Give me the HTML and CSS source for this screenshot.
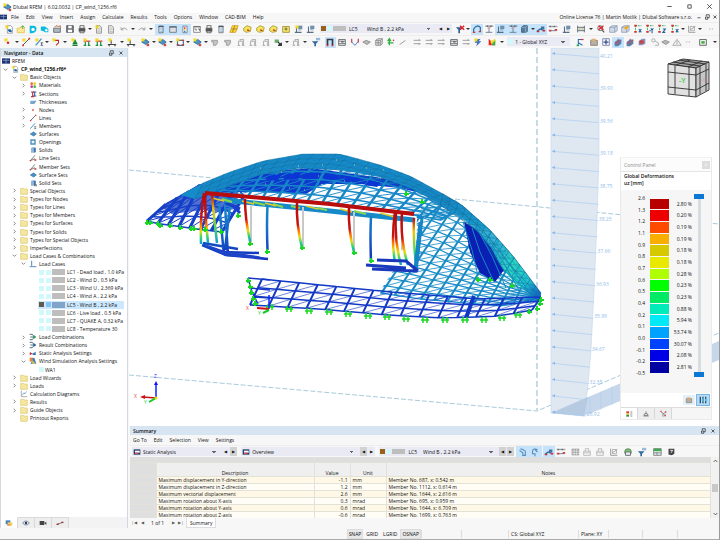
FILE: index.html
```html
<!DOCTYPE html>
<html lang="en">
<head>
<meta charset="utf-8">
<title>Dlubal RFEM</title>
<link rel="stylesheet" href="styles.css">
</head>
<body>
<svg class="sprite" aria-hidden="true">
  <symbol id="star" viewBox="0 0 12 12"><path d="M3.5 1v5M1 3.5h5M1.8 1.8l3.4 3.4M5.2 1.8L1.8 5.2" stroke="#f0d818" fill="none"/></symbol>
  <symbol id="new" viewBox="0 0 12 12"><path d="M4 2h4l2 2v7H4z" fill="#fff" stroke="#8592a0"/><path d="M5 7h3l1 2H6z" fill="#175d9c" stroke="#175d9c"/><use href="#star"/></symbol>
  <symbol id="open" viewBox="0 0 12 12"><path d="M1.500 10.500V5h3l1-1.500h4.500v7z" fill="#ffe999" stroke="#e4c04c"/><path d="M8 2v4M6 4l2-2 2 2" fill="none" stroke="#50ad50"/></symbol>
  <symbol id="dlubal" viewBox="0 0 12 12"><path d="M2 2h5q4 1 3 5-1 4-5 4H2z" fill="#09bbdf"/><circle cx="6" cy="6.500" r="2" fill="#fff"/></symbol>
  <symbol id="cloud" viewBox="0 0 12 12"><path d="M1 3h5l4 3v4H6L3 8H1z" fill="#09bbdf"/><circle cx="7.500" cy="7.500" r="1.500" fill="#fff"/></symbol>
  <symbol id="pack" viewBox="0 0 12 12"><path d="M2 5h8v5H2z" fill="#b1b9c0" stroke="#596575"/><path d="M3 4l2-2 3 1 2-1v3" fill="#e8d9ae" stroke="#a36b58"/></symbol>
  <symbol id="save" viewBox="0 0 12 12"><path d="M2 2h8v8H2z" fill="#71777b" stroke="#51565a"/><path d="M4 2h4v3H4zM3.500 7h5v3h-5z" fill="#fff"/></symbol>
  <symbol id="print" viewBox="0 0 12 12"><path d="M3.500 2h5v3h-5zM3.500 8h5v2.500h-5z" fill="#fff" stroke="#555"/><path d="M2 5h8v4H2z" fill="#555"/></symbol>
  <symbol id="page" viewBox="0 0 12 12"><path d="M3 2h4l2 2v7H3z" fill="#e8e8e6" stroke="#8b8b8b"/><path d="M4 5h4M4 7h4M4 9h4" stroke="#aaa" stroke-width=".6"/></symbol>
  <symbol id="pagestar" viewBox="0 0 12 12"><use href="#page"/><use href="#star"/></symbol>
  <symbol id="undo" viewBox="0 0 12 12"><path d="M2.500 4v3h3M3 6q3-3 7 1" fill="none" stroke="#969696"/></symbol>
  <symbol id="redo" viewBox="0 0 12 12"><path d="M9.500 4v3h-3M9 6Q6 3 2 7" fill="none" stroke="#969696"/></symbol>
  <symbol id="pane" viewBox="0 0 12 12"><path d="M3.500 2.500h5v8h-5z" fill="#ececec" stroke="#626d7b"/><path d="M3 3h6" stroke="#4c596b" stroke-width="1.500"/><path d="M5 5h3M5 7h3M5 9h3" stroke="#66a5dc" stroke-width=".7"/></symbol>
  <symbol id="table" viewBox="0 0 12 12"><path d="M2 3h8v7H2z" fill="#dedede" stroke="#697480"/><path d="M2 3.500h8" stroke="#697480" stroke-width="2"/></symbol>
  <symbol id="scale" viewBox="0 0 12 12"><path d="M3.500 2.500h5v8h-5z" fill="#fff" stroke="#68788b"/><path d="M5 4h1.500v2H5z" fill="#e42127"/><path d="M5 6h1.500v2H5z" fill="#f5da1a"/><path d="M5 8h1.500v2H5z" fill="#1f69cb"/></symbol>
  <symbol id="window" viewBox="0 0 12 12"><path d="M2 3h8v7H2z" fill="#fff" stroke="#777"/><path d="M2 3.500h8M3 6h2v2M7 6h2v2" fill="none" stroke="#555"/></symbol>
  <symbol id="plane" viewBox="0 0 12 12"><path d="M4 2h7L8 10H1z" fill="#f7de32" stroke="#d29a2a"/><path d="M3 6h7M7 2L4 10" stroke="#a7752d"/></symbol>
  <symbol id="yellow" viewBox="0 0 12 12"><path d="M2 5l4-3 5 2-1 5-5 1-3-2z" fill="#f5e659" stroke="#a8973a"/><path d="M6 7l3 1" stroke="#c23822" stroke-width="1.500"/></symbol>
  <symbol id="ybox" viewBox="0 0 12 12"><path d="M2 3h8v7H2z" fill="#f5e768" stroke="#9c8a38"/><path d="M4 6h4M6 4v4" stroke="#5d5935"/></symbol>
  <symbol id="load" viewBox="0 0 12 12"><path d="M3 3v7M1 10h8" stroke="#566e85" stroke-width="1.300"/><path d="M5 2h5v4H5z" fill="#7090b1"/><path d="M5 7h4" stroke="#8394a2"/></symbol>
  <symbol id="loadstar" viewBox="0 0 12 12"><use href="#load"/><use href="#star"/></symbol>
  <symbol id="filter" viewBox="0 0 12 12"><path d="M1 5h8L6 8v3H4V8z" fill="#3269a2"/><path d="M6 1h5v3H6z" fill="#9ab8d7"/></symbol>
  <symbol id="filterx" viewBox="0 0 12 12"><path d="M1 4h7L6 7v4H4V7z" fill="#28629d"/><path d="M6 2l5 5M11 2L6 7" stroke="#df1a22" stroke-width="1.600"/></symbol>
  <symbol id="deform" viewBox="0 0 12 12"><path d="M2 10V6q4-6 8-2v5" fill="none" stroke="#376d99" stroke-width="1.500"/><path d="M1 10h3M8 9h3" stroke="#d13c38" stroke-width="1.500"/></symbol>
  <symbol id="dots" viewBox="0 0 12 12"><path d="M2 2.500h9" stroke="#46515c" stroke-width="2" stroke-dasharray="1 .7"/><path d="M6 4v6M2 10h8" stroke="#617487"/><path d="M4 5l4-1" stroke="#d88"/></symbol>
  <symbol id="block" viewBox="0 0 12 12"><path d="M3 4l2-2h5v7l-2 1H3z" fill="#567d9f" stroke="#41617c"/><path d="M3 4h5l2-2M8 4v6" fill="none" stroke="#91b0cb"/></symbol>
  <symbol id="result" viewBox="0 0 12 12"><path d="M1 9l4-3 5 2" fill="none" stroke="#2563a0" stroke-width="1.500"/><path d="M6 3h4v3H6z" fill="#45759e"/><path d="M1 9h3M8 8h3" stroke="#d42c31" stroke-width="2"/></symbol>
  <symbol id="xxx" viewBox="0 0 12 12"><path d="M1 3h10" stroke="#4b5358" stroke-width="2" stroke-dasharray="1 .6"/><path d="M2 8h8" stroke="#3e7aad"/><path d="M1 8h3M8 7h3" stroke="#d53e38" stroke-width="2"/></symbol>
  <symbol id="rail" viewBox="0 0 12 12"><path d="M2 2v8M10 2v8M2 4h8M2 8h8" stroke="#4b5b69"/><path d="M4 5v2M6 5v2M8 5v2" stroke="#ba5"/></symbol>
  <symbol id="findx" viewBox="0 0 12 12"><circle cx="5" cy="5" r="3" fill="#eee" stroke="#666"/><path d="M7 7l3 3" stroke="#555" stroke-width="1.500"/><path d="M3 2l6 5M9 2L3 7" stroke="#dc2024" stroke-width="1.500"/></symbol>
  <symbol id="cube" viewBox="0 0 12 12"><path d="M2 4l3-2h6v6l-3 2H2zM2 4h6v6M8 4l3-2" fill="#d2d9e8" stroke="#8290ac" stroke-width=".8"/></symbol>
  <symbol id="cubey" viewBox="0 0 12 12"><use href="#cube"/><path d="M6 6l3-3" stroke="#eeae1b" stroke-width="3"/></symbol>
  <symbol id="ax" viewBox="0 0 12 12"><path d="M3 2v8M3 2h7" stroke="#38a657" stroke-width="1.300" stroke-dasharray="2 1"/><path d="M1.500 2h3M1.500 9.500h3" stroke="#d82f31" stroke-width="2"/><path d="M7 6l3 4M10 6l-3 4" stroke="#20659a" stroke-width="1.300"/></symbol>
  <symbol id="ay" viewBox="0 0 12 12"><path d="M3 2v8M3 2h7" stroke="#38a657" stroke-width="1.300" stroke-dasharray="2 1"/><path d="M1.500 2h3M1.500 9.500h3" stroke="#d82f31" stroke-width="2"/><path d="M7 5l1.500 2.500L10 5M8.500 7.500V11M5 8h2" stroke="#20659a" stroke-width="1.300" fill="none"/></symbol>
  <symbol id="az" viewBox="0 0 12 12"><path d="M3 2v8M3 2h7" stroke="#38a657" stroke-width="1.300" stroke-dasharray="2 1"/><path d="M1.500 2h3M1.500 9.500h3" stroke="#d82f31" stroke-width="2"/><path d="M7 6h3l-3 4h3" stroke="#20659a" stroke-width="1.300" fill="none"/></symbol>
  <symbol id="graph" viewBox="0 0 12 12"><path d="M2 2v8h8M4 7l6-4" fill="none" stroke="#8e8e8e"/><path d="M4 3h5v5H4z" fill="none" stroke="#aaa"/></symbol>
  <symbol id="node" viewBox="0 0 12 12"><circle cx="6" cy="6" r="1.300" fill="#d22"/></symbol>
  <symbol id="nodestar" viewBox="0 0 12 12"><use href="#star"/><circle cx="6" cy="7" r="1.500" fill="#d22"/></symbol>
  <symbol id="line" viewBox="0 0 12 12"><path d="M2 10L10 2" stroke="#343434"/><path d="M1.500 10h2M9 2h2" stroke="#d33" stroke-width="2"/></symbol>
  <symbol id="linestar" viewBox="0 0 12 12"><use href="#line"/><use href="#star"/></symbol>
  <symbol id="member" viewBox="0 0 12 12"><path d="M2 10L9 2" stroke="#428bc1" stroke-width="1.400"/><path d="M8 7h3M8 10h3M9 7v3" stroke="#4d5e70"/></symbol>
  <symbol id="memberstar" viewBox="0 0 12 12"><use href="#member"/><use href="#star"/></symbol>
  <symbol id="arc" viewBox="0 0 12 12"><path d="M4 4h5v3l-3 3" fill="none" stroke="#b23030" stroke-width="1.300"/><use href="#star"/></symbol>
  <symbol id="support" viewBox="0 0 12 12"><path d="M6 4l2 4H4zM3 10h6" fill="#19af3c" stroke="#168136" stroke-width="1.500"/><use href="#star"/></symbol>
  <symbol id="supports" viewBox="0 0 12 12"><path d="M2 5h8" stroke="#d23838" stroke-width="1.500"/><path d="M4 6v4M8 6v4M2 10h3M7 10h3" stroke="#189546" stroke-width="1.500"/><use href="#star"/></symbol>
  <symbol id="beam" viewBox="0 0 12 12"><path d="M1 9h10M5 8V4M2 9l1 2M9 9l1 2" stroke="#444" stroke-width="1.300"/><use href="#star"/></symbol>
  <symbol id="surface" viewBox="0 0 12 12"><path d="M2 6l5-3 4 3-4 3z" fill="#4a91c7" stroke="#2b6c9e"/></symbol>
  <symbol id="surfacestar" viewBox="0 0 12 12"><use href="#surface"/><path d="M8 8h3v3H8z" fill="#c34e45"/><use href="#star"/></symbol>
  <symbol id="opening" viewBox="0 0 12 12"><path d="M3 3h6v6H3z" fill="#eef5fb" stroke="#4b8fc2" stroke-width="2"/></symbol>
  <symbol id="openingstar" viewBox="0 0 12 12"><path d="M3 4h7v6H3z" fill="#fff" stroke="#40709b" stroke-width="1.400"/><path d="M2 9.500h3M8 9.500h3M8 4h3" stroke="#cf3932" stroke-width="1.500"/><use href="#star"/></symbol>
  <symbol id="solid" viewBox="0 0 12 12"><path d="M3 3l2-1h5v7l-2 1H3z" fill="#90b5d8"/><path d="M7 3h3v6l-2 1z" fill="#3974aa"/></symbol>
  <symbol id="solidset" viewBox="0 0 12 12"><use href="#solid"/><path d="M9 8v3M11 8v3" stroke="#333"/></symbol>
  <symbol id="thick" viewBox="0 0 12 12"><path d="M2 4h8l-2 4H2z" fill="#76add9"/><path d="M2 8h6l2-4" fill="none" stroke="#356b9c"/></symbol>
  <symbol id="material" viewBox="0 0 12 12"><circle cx="4" cy="4" r="2" fill="#eb6a33"/><circle cx="8.500" cy="4" r="2" fill="#e6cb28"/><circle cx="4" cy="8.500" r="2" fill="#cb36ae"/><circle cx="8.500" cy="8.500" r="2" fill="#44bb43"/></symbol>
  <symbol id="section" viewBox="0 0 12 12"><path d="M3 3h5M3 10h5M5.500 3v7" stroke="#d42e37" stroke-width="1.700"/><path d="M6 3h5M6 9h5M8.500 3v6" stroke="#2869a3" stroke-width="1.700"/></symbol>
  <symbol id="lineset" viewBox="0 0 12 12"><path d="M2 10L9 2M2 10l7-3" stroke="#444"/><path d="M8 9h3M1 10h2" stroke="#c23b3b" stroke-width="2"/></symbol>
  <symbol id="folder" viewBox="0 0 12 12"><path d="M1 2h4l1 1h5v8H1z" fill="#f5e79d" stroke="#dbc777"/></symbol>
  <symbol id="lc" viewBox="0 0 12 12"><path d="M4 1v8M1 10h10" stroke="#3e79b0" stroke-width="1.300"/></symbol>
  <symbol id="comb" viewBox="0 0 12 12"><path d="M1 2h4l3 4-3 4H1M2 6h6" fill="none" stroke="#3d586c" stroke-width="1.300"/><path d="M7 3l4 3-4 3z" fill="#279f4d"/></symbol>
  <symbol id="rcomb" viewBox="0 0 12 12"><path d="M1 2h4l3 4-3 4H1M2 6h6" fill="none" stroke="#3d586c" stroke-width="1.300"/><path d="M7 3l4 3-4 3z" fill="#2365aa"/></symbol>
  <symbol id="static" viewBox="0 0 12 12"><path d="M1 7h4M2 5v4" fill="none" stroke="#d4373b" stroke-width="1.700"/><path d="M5 7l5-3v5H6z" fill="#2f75b4"/></symbol>
  <symbol id="windset" viewBox="0 0 12 12"><path d="M1 1h5v6H1z" fill="#e7863b"/><path d="M5 2l3-1 3 9H2l4-5z" fill="#397ebd"/><path d="M5 5l5 5H5z" fill="#f2cb45"/></symbol>
  <symbol id="calc" viewBox="0 0 12 12"><path d="M2 1v9h9" fill="none" stroke="#888"/><path d="M3 8l3-4 1 2 3-4" fill="none" stroke="#5297cb"/></symbol>
  <symbol id="rfem" viewBox="0 0 12 12"><path d="M0 2h12v8H0z" fill="#1e3473"/><path d="M1 5h10M6 2v8" stroke="#9badd7"/></symbol>
  <symbol id="grey" viewBox="0 0 12 12"><path d="M3 10V5h5v5M5 5V3h4v7M2 10h3M7 10h3" fill="none" stroke="#b4b4b4" stroke-width="1.300"/></symbol>
  <symbol id="greyf" viewBox="0 0 12 12"><path d="M2 4h7v3l-2 3H4V6H2z" fill="#c4c4c4" stroke="#999"/></symbol>
  <symbol id="green" viewBox="0 0 12 12"><path d="M2 3h5v4H2z" fill="#68a86d"/><path d="M6 6l4 4M10 7v3H6" stroke="#313b36" stroke-width="1.500"/></symbol>
  <symbol id="frame" viewBox="0 0 12 12"><path d="M3 10V3h6v7" fill="none" stroke="#3a3a45" stroke-width="2"/><path d="M2 10h2M8 10h2" stroke="#d22" stroke-width="2"/></symbol>
  <symbol id="film" viewBox="0 0 12 12"><path d="M2 3h8v7H2zM2 5h8M2 8h8" fill="none" stroke="#5e6266"/><path d="M5 6h3" stroke="#222"/></symbol>
  <symbol id="moment" viewBox="0 0 12 12"><path d="M2 3v3l4 4 4-5V3" fill="none" stroke="#376dbf"/><path d="M2 2v5M10 2v5" stroke="#d83f49" stroke-width="1.300"/></symbol>
  <symbol id="mesh" viewBox="0 0 12 12"><path d="M1 6l4-2 5 2-4 3z" fill="#bbb" stroke="#888"/></symbol>
  <symbol id="cubegrey" viewBox="0 0 12 12"><path d="M2 4l3-2h5v6l-2 2H2zM2 4h6v6M8 4l2-2M5 4v6M2 7h6" fill="#ddd" stroke="#777" stroke-width=".8"/></symbol>
  <symbol id="react" viewBox="0 0 12 12"><path d="M4 10V3M2 5l2-3 2 3M2 7h7" fill="none" stroke="#2eae42" stroke-width="1.500"/><circle cx="9" cy="4" r="1" fill="#d33"/></symbol>
  <symbol id="diag" viewBox="0 0 12 12"><path d="M2 9l7-5" stroke="#8a8a8a"/></symbol>
  <symbol id="diaggrey" viewBox="0 0 12 12"><path d="M2 4h8l-2-1M2 8h8L8 9" fill="none" stroke="#8e8e8e"/></symbol>
  <symbol id="flash" viewBox="0 0 12 12"><path d="M4 3l5-1-2 3h3l-6 6 1-4H2z" fill="#3d6ec3"/><use href="#star"/></symbol>
  <symbol id="rainbow" viewBox="0 0 12 12"><path d="M2 2v8h8z" fill="#e52524"/><path d="M4 5l6-3v4l-4 4z" fill="#f3dd2d"/><path d="M6 8l4-4v6H6z" fill="#42ac48"/></symbol>
  <symbol id="axis" viewBox="0 0 12 12"><path d="M4 9V3h6M4 7l5 3" fill="none" stroke="#2a70b7" stroke-width="1.300"/><path d="M2 10h3" stroke="#2ca54d" stroke-width="2"/><path d="M7 3h3" stroke="#d33" stroke-width="1.500"/></symbol>
  <symbol id="photo" viewBox="0 0 12 12"><path d="M2 4h8v6H2z" fill="#b6b0a5" stroke="#847b6f"/><path d="M3 2h5v3H3z" fill="#deae78"/></symbol>
  <symbol id="target" viewBox="0 0 12 12"><path d="M2 2h8v8H2z" fill="none" stroke="#707bb1"/><path d="M6 3v6M3 6h6" stroke="#314e8a" stroke-width="1.500"/></symbol>
  <symbol id="orb" viewBox="0 0 12 12"><path d="M2 6l4-3h4v5l-4 3H2z" fill="#5085b7"/><path d="M2 8l8-4M6 2v8" stroke="#d24a4a"/></symbol>
  <symbol id="orbr" viewBox="0 0 12 12"><path d="M2 5l4-3h4v6l-4 2H2z" fill="#8094bf"/><path d="M3 4h5v4H3z" fill="#cf4048"/></symbol>
  <symbol id="link" viewBox="0 0 12 12"><circle cx="4" cy="4" r="2" fill="none" stroke="#a4a4a4"/><path d="M6 5l4 2v3H6" fill="none" stroke="#a4a4a4"/></symbol>
  <symbol id="turn" viewBox="0 0 12 12"><path d="M4 2l3 1 3 2v5H7V7L3 4" fill="none" stroke="#5a8cba" stroke-width="1.300"/></symbol>
  <symbol id="turnback" viewBox="0 0 12 12"><path d="M9 3q-5-2-6 2v3h3v3M6 3l3 3" fill="none" stroke="#5a8cba" stroke-width="1.300"/></symbol>
  <symbol id="mirror" viewBox="0 0 12 12"><path d="M6 2v9M5 4l-4 6h4M7 4l4 6H7" fill="none" stroke="#a0a0a0"/></symbol>
  <symbol id="greenbox" viewBox="0 0 12 12"><path d="M2 3h8v7H2z" fill="#eaf6e9" stroke="#555"/><path d="M4 5h4v3H4z" fill="#49a848"/></symbol>
  <symbol id="more" viewBox="0 0 12 12"><path d="M4 6h1M7 6h1" stroke="#777"/></symbol>
  <symbol id="eye" viewBox="0 0 12 12"><path d="M1 6q5-6 10 0-5 6-10 0" fill="#fff" stroke="#435670"/><circle cx="6" cy="6" r="2" fill="#2c3b65"/></symbol>
  <symbol id="camera" viewBox="0 0 12 12"><path d="M1 3h7v6H1zM8 6l3-2v5z" fill="#444"/></symbol>
  <symbol id="seg" viewBox="0 0 12 12"><path d="M1 8l10-3" stroke="#444"/><path d="M1 8h3M8 5h3" stroke="#ad272e" stroke-width="2"/></symbol>
  <symbol id="navi" viewBox="0 0 12 12"><path d="M1 2h7v6H1z" fill="#4c83b7"/><path d="M4 5h7v5H4z" fill="#f0cf62"/><path d="M3 9h5" stroke="#c4483e"/></symbol>
  <symbol id="legend" viewBox="0 0 12 12"><path d="M2 2h4v3H2z" fill="#d33"/><path d="M2 5h4v2H2z" fill="#ead21e"/><path d="M2 7h4v3H2z" fill="#3a8b3d"/><path d="M8 3h3M8 6h3M8 9h3" stroke="#555"/></symbol>
  <symbol id="balance" viewBox="0 0 12 12"><path d="M2 9h8M6 2v3M3 8q0-3 3-3t3 3z" fill="none" stroke="#5e5e5e"/></symbol>
  <symbol id="branch" viewBox="0 0 12 12"><path d="M6 10V5L3 3M6 6l4-3M9 6v4" fill="none" stroke="#606060"/><path d="M2 2h2M9 3h2M8 8h2" stroke="#d44" stroke-width="2"/></symbol>
  <symbol id="bars" viewBox="0 0 12 12"><path d="M2 1v10M6 1v10M10 1v10" stroke="#2d5177" stroke-width="2"/><path d="M6 3v6M10 4v4" stroke="#52bdd4" stroke-width="2"/></symbol>
  <symbol id="static2" viewBox="0 0 12 12"><path d="M1 2h10v8H1z" fill="#25406f"/><path d="M3 4h7v3H3z" fill="#fff"/><path d="M3 8h5" stroke="#e2504e" stroke-width="2"/></symbol>
  <symbol id="globe" viewBox="0 0 12 12"><circle cx="6" cy="6" r="4" fill="#81bd7b" stroke="#4d864b"/><path d="M3 6h6v4H3z" fill="#eee" stroke="#667"/></symbol>
  <symbol id="sheet" viewBox="0 0 12 12"><path d="M2 2h9v8H2z" fill="#eee" stroke="#777"/><path d="M2 3.500h9" stroke="#3fa850" stroke-width="3"/><path d="M6 6v4M2 7h9" stroke="#688"/></symbol>
  <symbol id="help" viewBox="0 0 12 12"><path d="M3 2h7v6l-3 2-4-1z" fill="#444"/><path d="M5 4h3L6 7" fill="none" stroke="#fff"/></symbol>
  <symbol id="keys" viewBox="0 0 12 12"><path d="M2 2h9v8H2z" fill="#a2a2a2"/><path d="M2 5h9M2 8h9M5 2v8M8 2v8" stroke="#ddd"/></symbol>
  <symbol id="tray" viewBox="0 0 12 12"><path d="M2 5h8v5H2zM4 5V2h4v3M2 7h8" fill="none" stroke="#b4b4b4"/></symbol>
</svg>

<div class="app">
  <header class="titlebar">
    <svg class="ic"><use href="#surfacestar"/></svg>
    <h1>Dlubal RFEM | 6.02.0032 | CP_wind_1256.rf6</h1>
    <div class="winbtns">
      <button aria-label="Minimize"><svg viewBox="0 0 8 8"><path d="M2 4h4" stroke="#333" stroke-width=".7"/></svg></button>
      <button aria-label="Maximize"><svg viewBox="0 0 8 8"><path d="M2.500 2.500h3v3h-3z" fill="none" stroke="#333" stroke-width=".7"/></svg></button>
      <button aria-label="Close"><svg viewBox="0 0 8 8"><path d="M2 2l4 4M6 2L2 6" stroke="#333" stroke-width=".7"/></svg></button>
    </div>
  </header>
  <nav class="menubar">
    <svg class="ic"><use href="#rfem"/></svg>
    <a href="#">File</a><a href="#">Edit</a><a href="#">View</a><a href="#">Insert</a><a href="#">Assign</a><a href="#">Calculate</a><a href="#">Results</a><a href="#">Tools</a><a href="#">Options</a><a href="#">Window</a><a href="#">CAD-BIM</a><a href="#">Help</a>
    <span class="license">Online License 76 | Martin Motlik | Dlubal Software s.r.o.</span>
    <div class="docbtns">
      <button aria-label="Minimize document"><svg viewBox="0 0 8 8"><path d="M2 5h4" stroke="#333"/></svg></button>
      <button aria-label="Restore document"><svg viewBox="0 0 8 8"><path d="M2 4h3v3H2zM3 3V1h4v4H5" fill="none" stroke="#333"/></svg></button>
      <button aria-label="Close document"><svg viewBox="0 0 8 8"><path d="M2 2l4 4M6 2L2 6" stroke="#333"/></svg></button>
    </div>
  </nav>

  <div class="toolbar main-tools">
    <div class="group" data-icons="new open dlubal cloud pack save print v pagestar page"></div>
    <div class="group" data-icons="undo v redo v"></div>
    <div class="group" data-icons="+pane +table +scale window print pane"></div>
    <div class="group" data-icons="plane yellow yellow yellow ybox"></div>
    <div class="group" data-icons="loadstar load"></div>
    <div class="picker">
      <i class="sw brown"></i><i class="sw cyan"></i><i class="sw wide"></i><span class="code">LC5</span>
      <select aria-label="Load case"><option>Wind B , 2.2 kPa</option></select>
      <button class="step" aria-label="Previous load case">◀</button><button class="step" aria-label="Next load case">▶</button>
    </div>
    <div class="group" data-icons="filterx v"></div>
    <div class="group" data-icons="+deform dots +load +dots +block +v +result xxx"></div>
    <div class="group" data-icons="load rail v"></div>
    <div class="group" data-icons="findx cube cubey"></div>
    <div class="group" data-icons="ax ay az ax v graph v"></div>
    <div class="group" data-icons="more"></div>
  </div>
  <div class="toolbar edit-tools">
    <div class="group" data-icons="nodestar v linestar memberstar v arc v"></div>
    <div class="group" data-icons="support supports supports"></div>
    <div class="group" data-icons="beam v beam"></div>
    <div class="group" data-icons="surfacestar v surfacestar v openingstar v surfacestar v greyf"></div>
    <div class="group" data-icons="greyf grey grey grey green v grey v"></div>
    <div class="group" data-icons="filter"></div>
    <div class="group" data-icons="+frame film"></div>
    <div class="group" data-icons="moment mesh cubegrey react diag"></div>
    <div class="group" data-icons="diaggrey diaggrey diaggrey film diaggrey flash"></div>
    <div class="group" data-icons="rainbow v"></div>
    <div class="picker">
      <i class="sw cyan"></i>
      <select aria-label="Coordinate system"><option>1 - Global XYZ</option></select>
    </div>
    <div class="group" data-icons="axis"></div>
    <div class="group" data-icons="photo target +orb orb orbr"></div>
    <div class="group" data-icons="link mesh mirror more"></div>
    <div class="group" data-icons="greenbox v"></div>
  </div>

  <aside class="navigator">
    <div class="dock-title"><h2>Navigator - Data</h2><button aria-label="Float"><svg viewBox="0 0 8 8"><path d="M2 4h3v3H2zM3 3V1h4v4H5" fill="none" stroke="#333"/></svg></button><button aria-label="Close"><svg viewBox="0 0 8 8"><path d="M2 2l4 4M6 2L2 6" stroke="#333"/></svg></button></div>
    <ul class="tree" id="tree"></ul>
    <div class="spacer"></div>
    <div class="navtabs">
      <button class="on" aria-label="Data"><svg class="ic"><use href="#navi"/></svg></button>
      <button aria-label="Display"><svg class="ic"><use href="#eye"/></svg></button>
      <button aria-label="Views"><svg class="ic"><use href="#camera"/></svg></button>
      <button aria-label="Results"><svg class="ic"><use href="#seg"/></svg></button>
    </div>
  </aside>

  <main class="viewport">
    <svg class="scene" id="scene" viewBox="129 48 590 378" preserveAspectRatio="xMidYMid slice" role="img" aria-label="Deformed dome structure">
      <defs>
        <clipPath id="sideclip"><path d="M417 211L443 194 463 206 490 230 513 256 541 293 540 303 518 315 380 300 380 291 393 271 416 271z"/></clipPath>
        <linearGradient id="tip" x1="455" y1="200" x2="541" y2="290" gradientUnits="userSpaceOnUse"><stop offset="0" stop-color="#168bc8"/><stop offset=".5" stop-color="#17a8cc"/><stop offset=".7" stop-color="#15cfba"/><stop offset=".88" stop-color="#16c5ce"/><stop offset="1" stop-color="#1369c8"/></linearGradient>
        <linearGradient id="col" x1="0" y1="0" x2="0" y2="1"><stop offset="0" stop-color="#b80a0a"/><stop offset=".48" stop-color="#c81310"/><stop offset=".6" stop-color="#ff6800"/><stop offset=".75" stop-color="#e9dc0b"/><stop offset=".88" stop-color="#25d675"/><stop offset="1" stop-color="#119bd8"/></linearGradient>
        <linearGradient id="colb" x1="0" y1="0" x2="0" y2="1"><stop offset="0" stop-color="#168bc8"/><stop offset=".5" stop-color="#1469c8"/><stop offset="1" stop-color="#122fbe"/></linearGradient>
        <linearGradient id="cool" x1="0" y1="0" x2="0" y2="1"><stop offset="0" stop-color="#b80a0a"/><stop offset=".3" stop-color="#e9ca0b"/><stop offset=".7" stop-color="#49d65f"/><stop offset="1" stop-color="#119bd8"/></linearGradient>
      </defs>
      <g fill="none" stroke="#a8cadb" stroke-dasharray="5 2">
        <path d="M129 170L213 178M455 199L719 224M129 375L537 411L719 333"/>
        <path d="M537 48V411" stroke="#c6dce4" stroke-width="2" stroke-dasharray="6 3"/>
      </g>
      <path d="M551 413L719 341V360L584 416z" fill="#c6d7eb"/>
      <path d="M551 48H599V155L597 220 594 290 591 350 588 385 584 416 551 413z" fill="#dfe7f1" stroke="#c0d6ee" stroke-width=".6"/>
      <path d="M551 413L588 397 584 416z" fill="#b6cae2"/>
      <g id="loads" stroke="#a5c9f0" fill="#86b7ec"></g>

      <path d="M162 208L184 193 204 184 240 182 236 209 214 212 203 210 172 214z" fill="#1740c6" opacity=".75"/>
      <g id="mesh-left"></g>
      <path d="M212 192L235 177 262 172 310 168 390 179 432 196 400 188 360 184 322 184 306 194 260 192z" fill="#0d39cd"/>
      <g id="mesh-roof"></g>
      <path d="M180 195L203 183 230 172 263 161 303 154 340 154 380 165 410 176 443 194 463 206 490 230 478 228 450 209 410 188 380 177 340 170 300 168 262 174 232 184 212 193 195 199z" fill="#168bca"/>
      <g id="mesh-crest"></g>
      <path d="M268 176l14-2-4 6-13 1zM287 174l14-1-3 6-15 1zM306 173l15 0-4 6-15 0zM327 174l13 1-3 5-14-1zM347 176l13 2-3 4-14-1zM369 180l12 3-4 4-12-2z" fill="#0b36d5"/>

      <g id="mesh-side" clip-path="url(#sideclip)"></g>
      <path d="M464 222L478 230 492 247 504 270 495 282 480 273 470 252z" fill="#0a20b5"/>
      <path d="M455 200L463 206 490 230 513 256 541 293 540 300 528 293 514 282 502 268 491 248 478 232 466 222 440 205z" fill="url(#tip)" opacity=".85"/>
      <g id="mesh-tip"></g>
      <path d="M463 222L472 250 478 276M472 228l8 24 14 30M480 234l12 22 14 32M489 240l13 20 18 32M498 248l14 20 20 28" stroke="#168abf" fill="none"/>
      <g id="mesh-front"></g>
      <path d="M248 278L270 280M248 278l4 14 6 12M250 288l20 2M254 297l16 1" stroke="#1238c5" stroke-width="1.500" fill="none"/>
      <path d="M474 296l-8 22" stroke="#1236c4" stroke-width="4"/>

      <path d="M225 204L228 256M230 205L225 250M219 203l5 52M202 245l24 10 42 4M203 243l35 6M222 252l37 1" fill="none" stroke="url(#colb)" stroke-width="2.500"/>
      <path d="M202 243L225 251 258 256 268 259 225 256z" fill="#1c43c8"/>
      <path d="M232 205L240 213M226 203l14 6" stroke="#1640c8" stroke-width="3"/>
      <path d="M224 200L330 211 414 220" stroke="#168ac8" stroke-width="5" fill="none"/>
      <path d="M205 193L330 204 414 214" stroke="#b90d0d" stroke-width="4" fill="none"/>
      <path d="M222 199l10 3M253 202l12 3M273 204l10 3M291 206l9 2M317 208l10 2M354 211l12 3" stroke="#8cd64b" stroke-width="2"/>
      <path d="M212 198l12 3M242 201l12 3M265 203l11 3M306 206l12 3M340 209l12 3M380 213l15 4" stroke="#e2cc2b" stroke-width="1.500"/>
      <g fill="none" stroke-width="2.500">
        <path d="M204 193q-4 22-3 51" stroke="url(#col)"/><path d="M205 194q0 24 3 49" stroke="url(#col)"/><path d="M212 195q2 23 5 48" stroke="url(#cool)"/>
        <path d="M251 206V244M303 207V248M354 212V250M402 216V250" stroke="#c8c8c8" stroke-width="2"/>
        <path d="M245 199q0 20 5 42" stroke="url(#col)"/><path d="M297 203q-1 20 5 45" stroke="url(#col)"/><path d="M349 208q-1 22 5 44" stroke="url(#col)"/>
        <path d="M267.500 205q-1 20 0 45M371 216q-1 20 0 45" stroke="url(#colb)"/>
        <path d="M395 212q-4 28 0 50" stroke="url(#col)"/><path d="M396 213q-2 27 5 52" stroke="url(#col)"/><path d="M402 213q-2 27 6 52" stroke="url(#col)"/>
        <path d="M414 218q-1 22 2 46" stroke="url(#cool)"/>
      </g>
      <path d="M417 216L422 218 416 272M420 222l-5 48" fill="none" stroke="#1585c4" stroke-width="3"/>
      <path d="M377 260l29 1 12 10M366 265l40 3M372 269l45 2" stroke="#1a38bb" stroke-width="3" fill="none"/>
      <g id="supports-layer" fill="none" stroke="#18d922" stroke-width="2"></g>
      <g stroke="#e5dc74" stroke-width=".8"><path d="M260 168h1M281 172h1M298 166h1M318 176h1M336 160h1M354 165h1M366 168h1M383 170h1M344 181h1M322 165h1M380 178h1M289 188h1M304 190h1M265 184h1"/></g>
      <g fill="none"><path d="M269 309V295" stroke="#12f" stroke-width="1.500"/><path d="M269 309l-12-1" stroke="#c11" stroke-width="2"/><path d="M269 310l-6 3" stroke="#1c2" stroke-width="2"/></g>
      <text x="246" y="310" class="axr">X</text><text x="258" y="315" class="axg">Y</text>
      <g fill="none"><path d="M156 398V384" stroke="#12f" stroke-width="1.500"/><path d="M156 398l-13-1" stroke="#c11" stroke-width="1.500"/><path d="M156 398l-7 4" stroke="#1c2" stroke-width="2"/></g>
      <path d="M154 385l2-4 2 4z" fill="#11f"/><path d="M145 395v4l-5-2z" fill="#c11"/><circle cx="156" cy="398" r="1.500" fill="#e5df14"/>
      <text x="154" y="378" class="axb">Z</text><text x="134" y="398" class="axr">X</text><text x="144" y="404" class="axg">Y</text>
      <g stroke="#2f2f2f" stroke-width=".9" stroke-linejoin="round">
        <path d="M668 64l15-5 26 3-13 6z" fill="#a1a1a4"/><path d="M668 64l28 4v29l-28-3z" fill="#e1e1e2"/><path d="M696 68l13-6v28l-13 7z" fill="#c7c7c9"/>
        <path d="M668 72l28 3 13-6M668 87l28 3 13-7M675 65v29M689 67v29M700 66v28M706 64v27M673 62l27 4M679 60l26 4M676 65l14-5M688 67l14-6" fill="none"/>
      </g>
      <text x="679" y="83" class="axg face">-Y</text><text x="701" y="82" class="axr pale">-X</text>
    </svg>

    <section class="panel">
      <header><h2>Control Panel</h2><button aria-label="Close panel">×</button></header>
      <div class="panel-head"><strong>Global Deformations</strong><strong>uz [mm]</strong></div>
      <div class="legend">
        <ol class="values"><li>2.6</li><li>1.3</li><li>1.2</li><li>1.1</li><li>0.9</li><li>0.8</li><li>0.7</li><li>0.6</li><li>0.5</li><li>0.4</li><li>0.2</li><li>0.1</li><li>0.0</li><li>-0.1</li><li>-0.2</li><li>-0.5</li></ol>
        <ol class="bands" id="bands"></ol>
        <div class="sliders"><input type="range" class="hi" value="100" aria-label="Upper limit"><input type="range" class="lo" value="0" aria-label="Lower limit"></div>
      </div>
      <div class="panel-actions"><button aria-label="Edit colours"><svg class="ic"><use href="#photo"/></svg></button><button class="on" aria-label="Show scale"><svg class="ic"><use href="#bars"/></svg></button></div>
      <div class="panel-tabs"><button class="on" aria-label="Colour scale"><svg class="ic"><use href="#legend"/></svg></button><button aria-label="Factors"><svg class="ic"><use href="#balance"/></svg></button><button aria-label="Filter"><svg class="ic"><use href="#branch"/></svg></button></div>
    </section>
  </main>

  <section class="summary">
    <div class="dock-title"><h2>Summary</h2><button aria-label="Float"><svg viewBox="0 0 8 8"><path d="M2 4h3v3H2zM3 3V1h4v4H5" fill="none" stroke="#333"/></svg></button><button aria-label="Close"><svg viewBox="0 0 8 8"><path d="M2 2l4 4M6 2L2 6" stroke="#333"/></svg></button></div>
    <nav class="submenu"><a href="#">Go To</a><a href="#">Edit</a><a href="#">Selection</a><a href="#">View</a><a href="#">Settings</a></nav>
    <div class="toolbar sum-tools">
      <div class="picker"><svg class="ic"><use href="#static2"/></svg><select aria-label="Analysis"><option>Static Analysis</option></select><button class="step" aria-label="Previous analysis">◀</button><button class="step off" aria-label="Next analysis">▶</button></div>
      <div class="picker"><svg class="ic"><use href="#static2"/></svg><select aria-label="Table"><option>Overview</option></select><button class="step off" aria-label="Previous table">◀</button><button class="step" aria-label="Next table">▶</button></div>
      <div class="picker"><i class="sw brown"></i><i class="sw cyan"></i><i class="sw wide"></i><span class="code">LC5</span><select aria-label="Summary load case"><option>Wind B , 2.2 kPa</option></select><button class="step off" aria-label="Previous">◀</button><button class="step off" aria-label="Next">▶</button></div>
      <div class="group" data-icons="+turn +turnback"></div>
      <div class="group" data-icons="+result xxx"></div>
      <div class="group" data-icons="keys tray tray"></div>
      <div class="group" data-icons="graph globe filter sheet help"></div>
    </div>
    <div class="tablewrap">
      <table>
        <thead>
          <tr class="letters"><th></th><th></th><th></th><th></th><th></th></tr>
          <tr><th class="num"></th><th>Description</th><th>Value</th><th>Unit</th><th>Notes</th></tr>
        </thead>
        <tbody>
          <tr><th></th><td>Maximum displacement in Y-direction</td><td>-1.1</td><td>mm</td><td>Member No. 687, x: 0.542 m</td></tr>
          <tr><th></th><td>Maximum displacement in Z-direction</td><td>1.2</td><td>mm</td><td>Member No. 1112, x: 0.614 m</td></tr>
          <tr><th></th><td>Maximum vectorial displacement</td><td>2.6</td><td>mm</td><td>Member No. 1644, x: 2.616 m</td></tr>
          <tr><th></th><td>Maximum rotation about X-axis</td><td>0.3</td><td>mrad</td><td>Member No. 695, x: 0.959 m</td></tr>
          <tr><th></th><td>Maximum rotation about Y-axis</td><td>0.6</td><td>mrad</td><td>Member No. 1644, x: 6.709 m</td></tr>
          <tr><th></th><td>Maximum rotation about Z-axis</td><td>-0.6</td><td>mrad</td><td>Member No. 1699, x: 0.763 m</td></tr>
        </tbody>
      </table>
      <div class="scroll"><svg viewBox="0 0 8 8"><path d="M2 5l2-2 2 2" fill="none" stroke="#444"/></svg><i></i><svg viewBox="0 0 8 8"><path d="M2 3l2 2 2-2" fill="none" stroke="#444"/></svg></div>
    </div>
    <div class="pager"><button aria-label="First">|◀</button><button aria-label="Previous page">◀</button><span>1 of 1</span><button aria-label="Next page">▶</button><button aria-label="Last">▶|</button><button class="tab">Summary</button></div>
  </section>

  <footer class="status">
    <div class="snaps"><button class="on">SNAP</button><button>GRID</button><button>LGRID</button><button class="on">OSNAP</button></div>
    <span></span><span></span><span>CS: Global XYZ</span><span>Plane: XY</span><span></span><span></span><span></span>
  </footer>
</div>
<script src="app.js"></script>
</body>
</html>
```
FILE: styles.css
```css
* { box-sizing: border-box; }
body { margin: 0; font: 5px/8px "Open Sans", "Noto Sans", sans-serif; color: #111; background: #f5f5f5; }
h1, h2, ul, ol { margin: 0; padding: 0; font: inherit; list-style: none; }
a { color: inherit; text-decoration: none; }
button, select, input { font: inherit; color: inherit; margin: 0; padding: 0; border: 0; background: none; }
button { display: flex; align-items: center; justify-content: center; }
.sprite { position: absolute; width: 0; height: 0; }
.ic { width: 10px; height: 10px; flex: none; display: block; }

.app { display: grid; height: 100vh; grid-template-columns: 128px minmax(0, 1fr); grid-template-rows: 13px 9px 13px 13px minmax(0, 1fr) 102px 11px; border-right: 1px solid #999; border-bottom: 1px solid #aaa; background: #f7f7f7; }
.titlebar, .menubar, .toolbar, .status { grid-column: 1 / -1; min-width: 0; }
.titlebar { display: flex; align-items: center; gap: 1px; padding-left: 2px; background: #fff; }
.titlebar h1 { flex: 1; }
.winbtns, .docbtns { display: flex; }
.winbtns button { width: 20px; }
.winbtns svg { width: 9px; height: 9px; }
.docbtns svg { width: 6px; height: 6px; }
.docbtns button { width: 8px; }
.menubar { display: flex; align-items: center; gap: 7px; padding-bottom: 1px; }
.menubar .ic { width: 7px; height: 8px; margin-right: -3px; }
.license { margin-left: auto; margin-right: -4px; }

.toolbar { display: grid; border-top: 1px solid #ededed; }
.main-tools { padding-left: 3px; grid-template-columns: 115fr 37fr 73fr 65fr 25fr 136fr 17fr 89fr 35fr 37fr 72fr 15fr; }
.edit-tools { padding-left: 2px; grid-template-columns: 67fr 37fr 33fr 83fr 87fr 16fr 24fr 62fr 75fr 20fr 67fr 16fr 61fr 46fr 24fr; }
.group { display: flex; align-items: center; min-width: 0; padding-right: 1px; }
.group button { flex: 12 1 0; min-width: 0; height: 11px; }
.group button.drop { flex: 5 1 0; }
.group .drop::after { content: ""; border: 2px solid transparent; border-top-color: #333; border-bottom: 0; }
.group .on { background: #c5e3fa; }
.group svg { width: 10px; height: 10px; flex: none; }
.picker { display: flex; align-items: center; min-width: 0; height: 9px; margin: 1px 2px; padding-left: 1px; gap: 1px; background: #e9eaf4; }
.picker select { flex: 1; min-width: 0; height: 8px; appearance: none; margin-left: 1px; background: linear-gradient(45deg, transparent 50%, #666 50%) right 7px center / 2px 2px no-repeat, linear-gradient(-45deg, transparent 50%, #666 50%) right 5px center / 2px 2px no-repeat; }
.picker .ic { width: 8px; height: 8px; }
.code { margin: 0 7px 0 2px; }
.sum-tools .code { margin-right: 4px; }
.sw { width: 5px; height: 5px; flex: none; background: #cff9fb; }
.sw.brown { background: #976119; }
.sw.wide { width: 13px; background: #bebebe; }
.step { width: 7px; height: 9px; font-size: 4px; }
.step.off { background: #d2d2d2; }

.dock-title { display: flex; align-items: center; height: 9px; padding: 0 1px 0 3px; background: #d7e5f2; flex: none; font-weight: 600; }
.dock-title h2 { flex: 1; }
.dock-title button { width: 10px; }
.dock-title svg { width: 6px; height: 6px; }
.navigator { grid-row: 5 / 7; display: flex; flex-direction: column; min-height: 0; border: 1px solid #d5d7e0; border-top: 0; border-bottom: 0; background: #fff; }
.tree { flex: 27 1 0; min-height: 0; display: grid; grid-auto-rows: 1fr; }
.spacer { flex: 7 1 0; }
.tree li { display: flex; align-items: center; min-height: 0; white-space: nowrap; gap: 2px; }
.tree .ic { width: 8px; height: 8px; }
.tree .l0 { padding-left: 1px; }
.tree .l1 { padding-left: 1px; font-weight: 700; }
.tree .l2 { padding-left: 10px; }
.tree .l3 { padding-left: 19px; }
.tree .l4 { padding-left: 37px; gap: 1px; }
.tree .exp { width: 7px; height: 7px; flex: none; }
.tree .exp path { fill: none; stroke: #777; }
.tree .sw { margin-left: 1px; height: 5px; width: 5px; }
.tree .sw.wide { width: 13px; height: 6px; margin-left: 0; margin-right: 1px; }
.tree .sel { background: linear-gradient(#cce8ff, #cce8ff) no-repeat 37px 0 / 86px 100%; }
.tree .sel .sw { background: #82c5f5; }
.tree .sel .sw:first-child { background: #625a4b; }
.tree .sel .sw.wide { background: #81a5c8; }
.navtabs { display: flex; height: 11px; flex: none; background: #f3f3f3; }
.navtabs button { width: 17px; border-right: 1px solid #d9d9d9; border-top: 1px solid #d9d9d9; background: #eee; }
.navtabs .ic { width: 8px; height: 8px; }
.navtabs .on { background: #fff; border-top-color: #fff; }

.viewport { position: relative; min-width: 0; min-height: 0; overflow: hidden; background: #fff; margin-left: 1px; }
.scene { display: block; width: 100%; height: 100%; }
.scene text { font-size: 5px; }
.scene .axr { fill: #e44; }
.scene .axg { fill: #2c2; }
.scene .axb { fill: #22f; }
.scene .face { font-size: 7px; fill: #6c6; font-weight: 700; }
.scene .pale { fill: #d99; }
.scene #loads text { fill: #94bce9; stroke: none; font-size: 5px; }

.panel { position: absolute; right: 7px; top: 109px; width: 92px; display: flex; flex-direction: column; background: #f6f6f6; border: 1px solid #eaeaea; border-top-color: #f2f2f2; }
.panel header { display: flex; justify-content: space-between; align-items: center; height: 14px; padding: 0 1px 0 3px; color: #8b8b8b; background: #fcfcfc; border-bottom: 1px solid #e4e4e4; }
.panel header button { width: 8px; height: 8px; background: #ddd; color: #fff; }
.panel-head { display: flex; flex-direction: column; height: 18px; padding: 1px 3px; line-height: 7px; background: #fff; }
.panel-head strong { font-weight: 600; }
.legend { display: grid; grid-template-columns: 24px 47px 10px; gap: 0 1px; padding: 2px 0 14px; align-items: start; }
.values { display: grid; grid-template-rows: repeat(16, minmax(0, 1fr)); height: 187px; text-align: right; align-items: center; }
.bands { display: grid; grid-template-rows: repeat(15, 1fr); height: 175px; margin: 6px 0 0 4px; }
.bands li { display: grid; grid-template-columns: 19px 1fr; align-items: center; text-align: right; padding-right: 1px; }
.bands i { height: calc(100% - 1px); }
.sliders { display: grid; height: 183px; margin-top: 2px; justify-items: center; background: linear-gradient(#d8dde2, #d8dde2) no-repeat center / 3px 100%; }
.sliders input { grid-area: 1 / 1; width: 10px; height: 183px; writing-mode: vertical-lr; direction: rtl; appearance: none; pointer-events: none; }
.sliders input::-webkit-slider-thumb { appearance: none; width: 10px; height: 5px; background: #0a78d4; pointer-events: auto; }
.panel-actions { display: flex; justify-content: flex-end; gap: 2px; height: 15px; padding: 2px 2px; background: #fff; border-bottom: 1px solid #ddd; }
.panel-actions button { width: 12px; height: 10px; background: #e2f0fb; }
.panel-actions .on { background: #b8daf4; outline: 1px solid #79b7e4; }
.panel-actions .ic { width: 8px; height: 8px; }
.panel-tabs { display: flex; height: 11px; }
.panel-tabs button { width: 17px; border-right: 1px solid #d8d8d8; background: #eee; }
.panel-tabs .on { background: #fff; }
.panel-tabs .ic { width: 8px; height: 8px; }

.summary { display: flex; flex-direction: column; min-width: 0; margin-left: 1px; padding-left: 1px; }
.submenu { display: flex; align-items: center; gap: 7px; height: 10px; padding-left: 3px; flex: none; }
.sum-tools { grid-template-columns: 109fr 138fr 138fr 27fr 26fr 38fr 72fr 40fr; height: 12px; flex: none; }
.tablewrap { display: flex; flex: 1; min-height: 0; overflow: hidden; }
table { flex: 1; border-collapse: collapse; table-layout: fixed; min-width: 0; height: 1px; }
th, td { padding: 0 2px; height: 7px; line-height: 6px; border: 0 solid #e2e2d8; border-right-width: 1px; border-bottom-width: 1px; white-space: nowrap; }
th { background: #efefef; font-weight: 400; }
.letters th { height: 5px; background: #dedede; line-height: 4px; }
.letters th:nth-child(1) { width: 26px; }
.letters th:nth-child(2) { width: 158px; }
.letters th:nth-child(3), .letters th:nth-child(4) { width: 36px; }
thead tr:nth-child(2) th { height: 14px; vertical-align: bottom; }
tbody th, thead .num { background: #dfdfdf; }
tbody tr:nth-child(odd) td { background: #fff8e6; }
tbody tr:nth-child(even) td { background: #fffdf5; }
tbody td:nth-child(3) { text-align: right; }
.scroll { width: 8px; display: flex; flex-direction: column; align-items: center; justify-content: space-between; background: #f1f1f1; }
.scroll svg { width: 7px; height: 8px; }
.scroll i { width: 6px; height: 8px; background: #c9c9c9; }
.pager { display: flex; height: 10px; flex: none; gap: 2px; padding-left: 1px; align-items: center; color: #555; }
.pager button { font-size: 4px; min-width: 6px; }
.pager span, .pager .tab { color: #111; font-size: 5px; margin: 0 4px; }
.pager .tab { height: 10px; padding: 0 3px; background: #fff; border: 1px solid #ddd; border-top: 0; margin: 0; }

.status { display: grid; grid-template-columns: 421fr 40fr 47fr 70fr 30fr 34fr 35fr 42fr; align-items: center; }
.snaps { display: flex; justify-content: flex-end; gap: 3px; padding-right: 1px; }
.snaps button { height: 8px; padding: 0 1px; }
.snaps .on { background: #e8e8e8; outline: 1px solid #ddd; }
.status span { height: 8px; border-left: 1px solid #ddd; padding-left: 2px; white-space: nowrap; }
```
FILE: app.js
```js
const icon = (name, cls = "ic") => `<svg class="${cls}"><use href="#${name}"/></svg>`;

// Toolbars: "v" is a drop-down arrow, a leading "+" marks a pressed button.
document.querySelectorAll("[data-icons]").forEach(group => {
  group.innerHTML = group.dataset.icons.split(" ").map(item => {
    const on = item[0] === "+" ? " on" : "";
    const name = item.replace("+", "");
    return name === "v"
      ? `<button class="drop${on}" aria-label="More options"></button>`
      : `<button class="tool${on}" aria-label="${name}">${icon(name)}</button>`;
  }).join("");
});

// Navigator rows: level, expander (> closed, v open, - none), icon, label.
const rows = `0 - rfem RFEM
1 v new CP_wind_1256.rf6*
2 v folder Basic Objects
3 > material Materials
3 > section Sections
3 - thick Thicknesses
3 > node Nodes
3 > line Lines
3 > member Members
3 - surface Surfaces
3 - opening Openings
3 - solid Solids
3 - lineset Line Sets
3 - lineset Member Sets
3 - surface Surface Sets
3 - solidset Solid Sets
2 > folder Special Objects
2 > folder Types for Nodes
2 > folder Types for Lines
2 > folder Types for Members
2 > folder Types for Surfaces
2 > folder Types for Solids
2 > folder Types for Special Objects
2 > folder Imperfections
2 v folder Load Cases & Combinations
3 v lc Load Cases
4 - case LC1 - Dead load , 1.0 kPa
4 - case LC2 - Wind D , 0.5 kPa
4 - case LC3 - Wind U , 2.369 kPa
4 - case LC4 - Wind A , 2.2 kPa
4 - case LC5 - Wind B , 2.2 kPa
4 - case LC6 - Live load , 0.5 kPa
4 - case LC7 - QUAKE A, 0.32 kPa
4 - case LC8 - Temperature 30
3 > comb Load Combinations
3 > rcomb Result Combinations
3 > static Static Analysis Settings
3 v windset Wind Simulation Analysis Settings
4 - swatch WA1
2 > folder Load Wizards
2 > folder Loads
2 - calc Calculation Diagrams
2 > folder Results
2 > folder Guide Objects
2 - folder Printout Reports`.split("\n");

const marks = { ">": "M3 2l2 2-2 2", "v": "M2 3l2 2 2-2", "-": "" };
document.getElementById("tree").innerHTML = rows.map(row => {
  const [, level, mark, kind, label] = row.match(/^(\d) (\S) (\S+) (.*)$/);
  const text = label.replace("&", "&amp;");
  const sel = label.startsWith("LC5") ? " sel" : "";
  let lead;
  if (kind === "case") lead = '<i class="sw"></i><i class="sw"></i><i class="sw wide"></i>';
  else if (kind === "swatch") lead = '<i class="sw"></i>';
  else lead = (level === "0" ? "" : `<svg class="exp" viewBox="0 0 8 8"><path d="${marks[mark]}"/></svg>`) + icon(kind);
  return `<li class="l${level}${sel}">${lead}<span>${text}</span></li>`;
}).join("");

// Colour scale with the share of the model in each band.
const bands = [["#b90000", "2.80"], ["#ee0000", "0.20"], ["#ff4b00", "0.19"], ["#f9ae00", "0.19"], ["#d6c900", "0.18"],
  ["#e9e900", "0.18"], ["#b0ff00", "0.28"], ["#00ff00", "0.23"], ["#00ea65", "0.23"], ["#00ebb9", "0.88"],
  ["#00e9f6", "5.94"], ["#00a2ff", "53.74"], ["#0042ff", "30.07"], ["#0000e6", "2.08"], ["#0000a2", "2.81"]];
document.getElementById("bands").innerHTML = bands
  .map(([color, share]) => `<li><i style="background:${color}"></i>${share} %</li>`).join("");

// Wind pressure profile: an arrow at each level, a value at every second one.
const pressures = ["40.21", "39.90", "39.56", "39.18", "38.75", "38.25", "37.66", "36.93", "35.99", "34.67", "32.35", "28.92"];
let arrows = "";
for (let i = 0; i < 23; i++) {
  const y = 53.5 + i * 16.3;
  const right = y < 155 ? 599 : 599 - 13 * Math.pow((y - 155) / 255, 1.7);
  arrows += `<path d="M${right} ${y + 4}L552 ${y}" stroke-width=".6"/><path d="M552 ${y}l3-1.500v3z" stroke="none"/>`;
  if (i % 2 === 0) arrows += `<text x="${right + 1}" y="${y + 4}">${pressures[i / 2]}</text>`;
}
for (let x = 590; x < 719; x += 11) {
  const y = 413 - (x - 551) * 0.43;
  arrows += `<path d="M${x} ${y}v${18 + (x - 590) * 0.02}" stroke-width=".5"/>`;
}
document.getElementById("loads").innerHTML = arrows;

// Point at fraction t of a polyline's length.
function along(line, t) {
  const lengths = line.slice(1).map((p, i) => Math.hypot(p[0] - line[i][0], p[1] - line[i][1]));
  let rest = t * lengths.reduce((a, b) => a + b, 0);
  for (let i = 0; i < lengths.length; i++) {
    if (rest <= lengths[i] || i === lengths.length - 1) {
      const f = rest / lengths[i];
      return [line[i][0] + f * (line[i + 1][0] - line[i][0]), line[i][1] + f * (line[i + 1][1] - line[i][1])];
    }
    rest -= lengths[i];
  }
}

// Triangulated grid shell between two edge curves.
function shell(id, bottom, top, nu, nv, color, rib, row, brace) {
  const node = (i, j) => {
    const a = along(bottom, i / nu), b = along(top, i / nu), v = j / nv;
    return `${(a[0] + v * (b[0] - a[0])).toFixed(1)} ${(a[1] + v * (b[1] - a[1])).toFixed(1)}`;
  };
  let ribs = "", lines = "", braces = "";
  for (let i = 0; i <= nu; i++) ribs += `M${node(i, 0)}L${node(i, nv)}`;
  for (let j = 0; j <= nv; j++) for (let i = 0; i < nu; i++) lines += `M${node(i, j)}L${node(i + 1, j)}`;
  for (let j = 0; j < nv; j++) for (let i = 0; i < nu; i++) braces += `M${node(i, j)}L${node(i + 1, j + 1)}`;
  document.getElementById(id).innerHTML = [[ribs, rib], [lines, row], [braces, brace]]
    .filter(part => part[1])
    .map(([d, width]) => `<path d="${d}" fill="none" stroke="${color}" stroke-width="${width}"/>`).join("");
}

const outline = [[203, 183], [230, 172], [263, 161], [303, 154], [340, 154], [380, 165], [410, 176], [443, 194], [463, 206]];
const rightEdge = [[443, 194], [463, 206], [490, 230], [513, 256], [541, 293]];
shell("mesh-left", [[147, 221], [160, 224], [205, 230], [222, 232]], [[166, 204], [203, 183], [232, 182], [244, 196]], 7, 4, "#1540c8", 3, 1.5, 1);
shell("mesh-roof", [[203, 193], [330, 204], [415, 215], [440, 220]], [[225, 176], [263, 163], [303, 157], [340, 157], [380, 166], [410, 177], [443, 195], [463, 208]], 16, 6, "#1787c8", 2.5, 1.5, 0.9);
shell("mesh-crest", [[195, 199], [262, 174], [300, 168], [340, 170], [410, 188], [450, 209]], outline, 24, 3, "#146f9f", 0.6, 0.5, 0.3);
shell("mesh-side", [[355, 289], [420, 299], [500, 306], [540, 300]], [[425, 190], [463, 206], [490, 230], [513, 256], [541, 293]], 14, 13, "#188bc6", 2, 1.2, 0.8);
shell("mesh-tip", [[440, 205], [478, 231], [502, 268], [537, 300]], rightEdge, 16, 2, "#186993", 0.6, 0.6, 0.4);
shell("mesh-front", [[250, 305], [320, 309], [387, 315], [445, 318], [500, 316], [532, 310]], [[262, 279], [380, 291], [480, 299], [541, 297]], 15, 3, "#1238c6", 2, 1.5, 0.6);

// Nodal supports; those along the front edge come in pairs.
const feet = [[147, 223], [150, 223], [158, 224], [160, 226], [170, 226], [180, 228], [191, 229], [194, 229], [205, 230], [221, 232], [238, 216],
  [250, 244], [267, 252], [302, 248], [354, 253], [371, 261], [248, 281], [250, 287], [251, 293], [253, 299], [255, 304],
  [270, 307], [289, 309], [309, 311], [329, 312], [348, 314], [368, 316], [387, 317], [406, 319], [425, 320], [445, 320],
  [465, 320], [484, 320], [502, 318], [518, 315], [529, 312], [537, 309], [540, 304], [541, 300], [478, 280], [490, 280], [406, 194], [422, 202], [512, 286]];
document.getElementById("supports-layer").innerHTML = feet.map(([x, y]) => {
  const pair = y > 306 && x < 525;
  return pair
    ? `<path d="M${x - 2} ${y - 3}v6M${x + 2} ${y - 3}v6M${x - 4} ${y}h8" stroke-width="1.500"/>`
    : `<path d="M${x} ${y - 3}v5M${x - 2} ${y}h5"/>`;
}).join("");
```
